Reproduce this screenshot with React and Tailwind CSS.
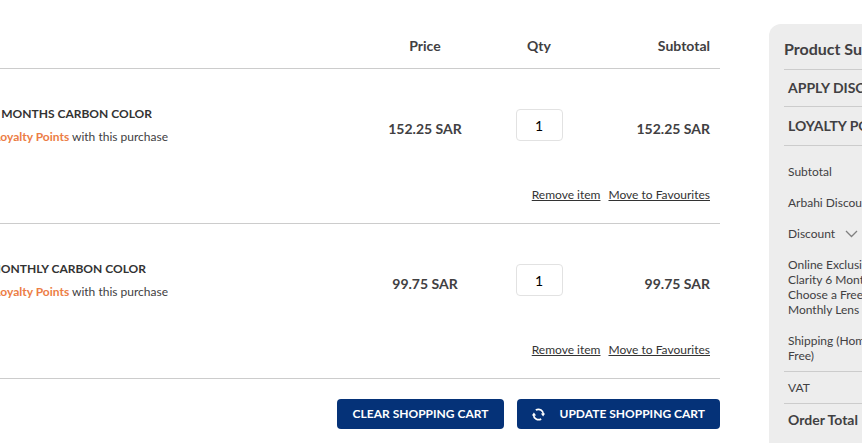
import React from "react";

const items = [
  { id: 1, title: "MONTHS CARBON COLOR", titleWidth: "w-[152px]", price: "152.25 SAR" },
  { id: 2, title: "MONTHLY CARBON COLOR", titleWidth: "w-[146px]", price: "99.75 SAR" },
];

function RefreshIcon() {
  return (
    <svg className="shrink-0" width="13" height="13" viewBox="0 0 13 13" fill="none" stroke="currentColor" strokeWidth="1.7" aria-hidden="true">
      <path d="M3.8 2.1A5 5 0 0 1 11.4 6.6" />
      <path d="M9.2 10.9A5 5 0 0 1 1.6 6.4" />
      <path d="M8.9 5.6h4.1l-1.9 2.8z" fill="currentColor" stroke="none" />
      <path d="M0 7.4h4.1L1.9 4.6z" fill="currentColor" stroke="none" />
    </svg>
  );
}

function CartItem({ item }) {
  return (
    <tbody className="text-[#414042]">
      <tr className="h-[116px] align-top">
        <td className="pt-[35px]">
          <div className={`flex justify-end overflow-hidden whitespace-nowrap text-xs leading-5 font-bold text-[#333333] ${item.titleWidth}`}>
            {item.title}
          </div>
          <div className="mt-[3px] flex w-[168px] justify-end overflow-hidden whitespace-pre text-xs leading-5">
            <span className="font-bold text-[#ec7d45]">Loyalty Points</span>
            <span> with this purchase</span>
          </div>
        </td>
        <td className="pt-[50px] text-center text-sm leading-5 font-bold">{item.price}</td>
        <td className="pt-10 text-center">
          <input
            aria-label={`Quantity of ${item.title}`}
            defaultValue="1"
            className="mx-auto block h-8 w-[47px] rounded border border-[#e2e2e2] bg-white text-center text-sm text-black"
          />
        </td>
        <td className="pt-[50px] pr-[10px] text-right text-sm leading-5 font-bold">{item.price}</td>
      </tr>
      <tr>
        <td colSpan={4} className="border-b border-[#cccccc] pr-[10px] pb-[18px]">
          <div className="flex justify-end gap-2 text-xs leading-5 text-[#333333]">
            <a href="#remove" className="underline">Remove item</a>
            <a href="#favourites" className="underline">Move to Favourites</a>
          </div>
        </td>
      </tr>
    </tbody>
  );
}

function Summary() {
  return (
    <aside className="mt-6 w-[93px] shrink-0 overflow-hidden rounded-tl-xl bg-[#ededed] pl-[15px] text-[#414042]">
      <div className="whitespace-nowrap">
        <h2 className="border-b border-[#cccccc] pt-[13px] pb-2 text-base leading-6 font-bold">Product Summary</h2>
        <h3 className="border-b border-[#cccccc] py-2 pl-1 text-sm leading-5 font-bold">APPLY DISCOUNT</h3>
        <h3 className="border-b border-[#cccccc] py-[9px] pl-1 text-sm leading-5 font-bold">LOYALTY POINTS</h3>
        <dl className="flex flex-col gap-4 border-b border-[#cccccc] pt-[18px] pb-2 pl-1 text-xs leading-[15px]">
          <dt>Subtotal</dt>
          <dt>Arbahi Discount</dt>
          <dt className="flex items-center gap-[10px]">
            Discount
            <svg width="13" height="8" viewBox="0 0 13 8" fill="none" stroke="#808080" strokeWidth="1.3" aria-hidden="true">
              <path d="M1 1l5.5 5.5L12 1" />
            </svg>
          </dt>
          <dt>
            Online Exclusive<br />
            Clarity 6 Months<br />
            Choose a Free<br />
            Monthly Lens
          </dt>
          <dt>
            Shipping (Home<br />
            Free)
          </dt>
        </dl>
        <div className="border-b border-[#cccccc] py-2 pl-1 text-xs leading-[15px]">VAT</div>
        <div className="py-[6px] pb-3 pl-1 text-sm leading-5 font-bold">Order Total</div>
      </div>
    </aside>
  );
}

export default function App() {
  return (
    <div className="flex min-h-screen gap-[49px] overflow-hidden bg-white font-['Lato','Open_Sans',sans-serif]">
      <main className="min-w-0 flex-1">
        <table className="w-full table-fixed border-separate border-spacing-0">
          <colgroup>
            <col />
            <col className="w-[114px]" />
            <col className="w-[114px]" />
            <col className="w-[124px]" />
          </colgroup>
          <thead className="text-sm leading-5 text-[#414042]">
            <tr>
              <th aria-label="Item" className="border-b border-[#cccccc]" />
              <th className="border-b border-[#cccccc] pt-9 pb-3">Price</th>
              <th className="border-b border-[#cccccc] pt-9 pb-3">Qty</th>
              <th className="border-b border-[#cccccc] pt-9 pr-[10px] pb-3 text-right">Subtotal</th>
            </tr>
          </thead>
          {items.map((item) => (
            <CartItem key={item.id} item={item} />
          ))}
        </table>
        <div className="mt-5 flex justify-end gap-[13px] text-xs leading-5 font-bold whitespace-nowrap text-white">
          <button type="button" className="h-[30px] w-[167px] rounded bg-[#053278]">CLEAR SHOPPING CART</button>
          <button type="button" className="flex h-[30px] w-[203px] items-center justify-between rounded bg-[#053278] px-[15px]">
            <RefreshIcon />
            UPDATE SHOPPING CART
          </button>
        </div>
      </main>
      <Summary />
    </div>
  );
}
